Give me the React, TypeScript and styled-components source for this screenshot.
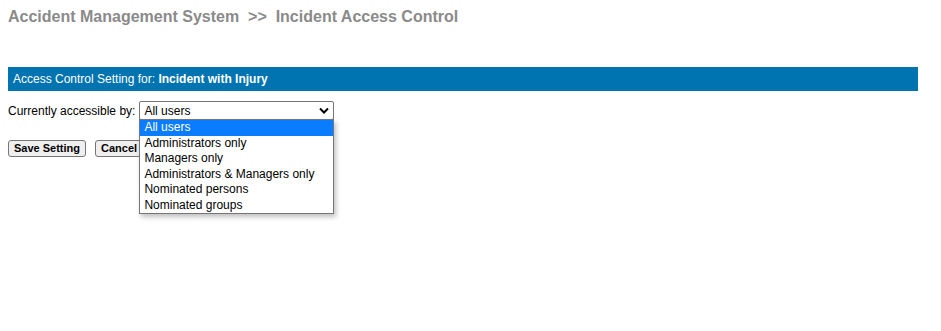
import React from "react";
import styled, { createGlobalStyle } from "styled-components";

const Global = createGlobalStyle`
  html, body { margin: 0; padding: 0; background: #fff; }
  body {
    padding: 8px 23px 8px 8px;
    min-height: 331px;
    box-sizing: border-box;
    font-family: Arial, "Liberation Sans", sans-serif;
  }
`;

const Title = styled.div`
  font-size: 16px;
  font-weight: bold;
  color: #8a8a8a;
  line-height: 18px;
  height: 18px;
  white-space: pre;
`;

const Bar = styled.div`
  margin-top: 41px;
  background: #0073b1;
  color: #fff;
  font-size: 12px;
  height: 24px;
  line-height: 24px;
  padding: 0 5px;
  b { font-weight: bold; }
`;

const Row = styled.div`
  margin-top: 10px;
  display: flex;
  align-items: center;
  gap: 4px;
  font-size: 12px;
  color: #000;
`;

const SelectWrap = styled.div`
  position: relative;
`;

const SelectBox = styled.div`
  box-sizing: border-box;
  width: 195px;
  height: 19px;
  border: 1px solid #767676;
  border-radius: 2px;
  display: flex;
  align-items: center;
  justify-content: space-between;
  padding: 0 4px;
  font-size: 12px;
  color: #000;
  background: #fff;
`;

const List = styled.ul`
  position: absolute;
  top: 18px;
  left: 0;
  width: 195px;
  box-sizing: border-box;
  margin: 0;
  padding: 0;
  list-style: none;
  border: 1px solid #767676;
  background: #fff;
  box-shadow: 2px 3px 5px rgba(0, 0, 0, 0.25);
  z-index: 10;
`;

const Item = styled.li<{ $active?: boolean }>`
  height: 15.5px;
  line-height: 15.5px;
  padding: 0 4px;
  font-size: 12px;
  white-space: nowrap;
  background: ${(p) => (p.$active ? "#0a7cff" : "transparent")};
  color: ${(p) => (p.$active ? "#fff" : "#000")};
`;

const Buttons = styled.div`
  margin-top: 20px;
  display: flex;
  gap: 9px;
`;

const Button = styled.button`
  box-sizing: border-box;
  height: 17px;
  padding: 0 5px;
  font-family: Arial, "Liberation Sans", sans-serif;
  font-size: 11px;
  font-weight: bold;
  color: #000;
  background: #efefef;
  border: 1px solid #767676;
  border-radius: 3px;
  line-height: 15px;
`;

const options = [
  "All users",
  "Administrators only",
  "Managers only",
  "Administrators & Managers only",
  "Nominated persons",
  "Nominated groups",
];

export default function App() {
  return (
    <>
      <Global />
      <Title>{"Accident Management System  >>  Incident Access Control"}</Title>
      <Bar>
        Access Control Setting for: <b>Incident with Injury</b>
      </Bar>
      <Row>
        <span>Currently accessible by:</span>
        <SelectWrap>
          <SelectBox>
            <span>All users</span>
            <svg width="10" height="7" viewBox="0 0 10 7">
              <path d="M1 1.5 L5 5.5 L9 1.5" fill="none" stroke="#000" strokeWidth="2" />
            </svg>
          </SelectBox>
          <List>
            {options.map((o, i) => (
              <Item key={o} $active={i === 0}>
                {o}
              </Item>
            ))}
          </List>
        </SelectWrap>
      </Row>
      <Buttons>
        <Button>Save Setting</Button>
        <Button>Cancel</Button>
      </Buttons>
    </>
  );
}
